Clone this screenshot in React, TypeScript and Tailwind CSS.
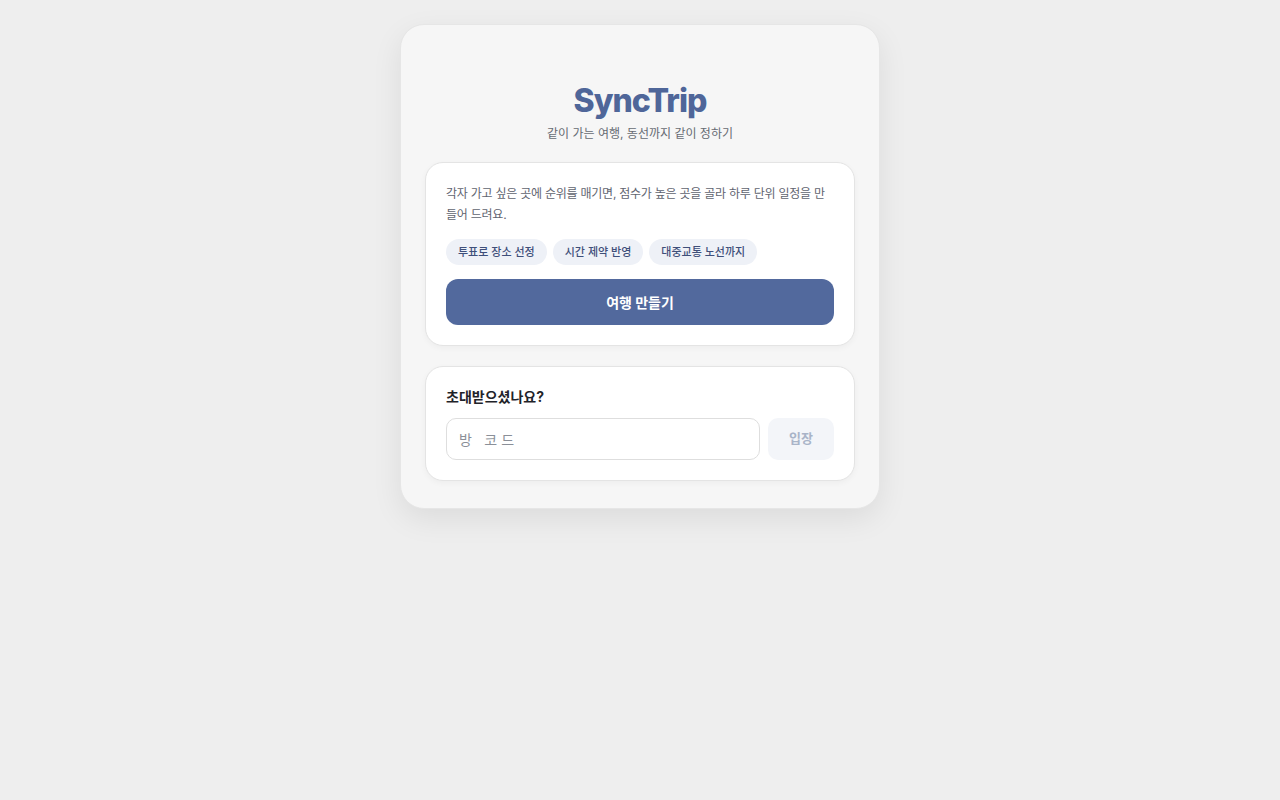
export default function App() {
  const chips = ['투표로 장소 선정', '시간 제약 반영', '대중교통 노선까지'];

  return (
    <div
      className="min-h-screen bg-[#eeeeee] flex justify-center pt-[24px]"
      style={{ fontFamily: 'Inter, "Noto Sans CJK KR", sans-serif' }}
    >
      <div className="w-[480px] h-fit rounded-[24px] bg-[#f6f6f6] border border-[#e6e6e6] shadow-[0_10px_30px_rgba(0,0,0,0.08)] px-6 pt-[57px] pb-[27px]">
        {/* Header */}
        <div className="text-center">
          <h1 className="text-[32px] leading-[38px] font-extrabold tracking-[-0.03em] text-[#4f6699]">SyncTrip</h1>
          <p className="mt-[6px] text-[12px] leading-[16px] text-[#666b73]">같이 가는 여행, 동선까지 같이 정하기</p>
        </div>

        {/* Create card */}
        <div className="mt-[20px] bg-white rounded-[18px] border border-[#e4e4e4] shadow-[0_2px_6px_rgba(0,0,0,0.04)] p-5">
          <p className="text-[12px] leading-[21px] tracking-[-0.02em] text-[#5f6470] break-all">
            각자 가고 싶은 곳에 순위를 매기면, 점수가 높은 곳을 골라 하루 단위 일정을 만들어 드려요.
          </p>
          <div className="flex gap-[6px] mt-[14px]">
            {chips.map((c) => (
              <span
                key={c}
                className="h-[26px] px-3 rounded-full bg-[#eef1f7] text-[#3e4f7a] text-[11px] font-medium flex items-center"
              >
                {c}
              </span>
            ))}
          </div>
          <button className="mt-[14px] w-full h-[46px] rounded-[12px] bg-[#52699d] text-white text-[14px] font-bold">
            여행 만들기
          </button>
        </div>

        {/* Join card */}
        <div className="mt-[20px] bg-white rounded-[18px] border border-[#e4e4e4] shadow-[0_2px_6px_rgba(0,0,0,0.04)] p-5">
          <h2 className="text-[14px] leading-[19px] font-bold text-[#1f2329]">초대받으셨나요?</h2>
          <div className="flex gap-2 mt-[12px]">
            <input
              placeholder="방 코드"
              className="flex-1 h-[42px] rounded-[10px] border border-[#dedede] px-3 text-[14px] tracking-[0.3em] placeholder:text-[#8a8f98] outline-none"
            />
            <button className="w-[66px] h-[42px] rounded-[10px] bg-[#f3f5f9] text-[#a9b4c8] text-[13px] font-semibold">
              입장
            </button>
          </div>
        </div>
      </div>
    </div>
  );
}
